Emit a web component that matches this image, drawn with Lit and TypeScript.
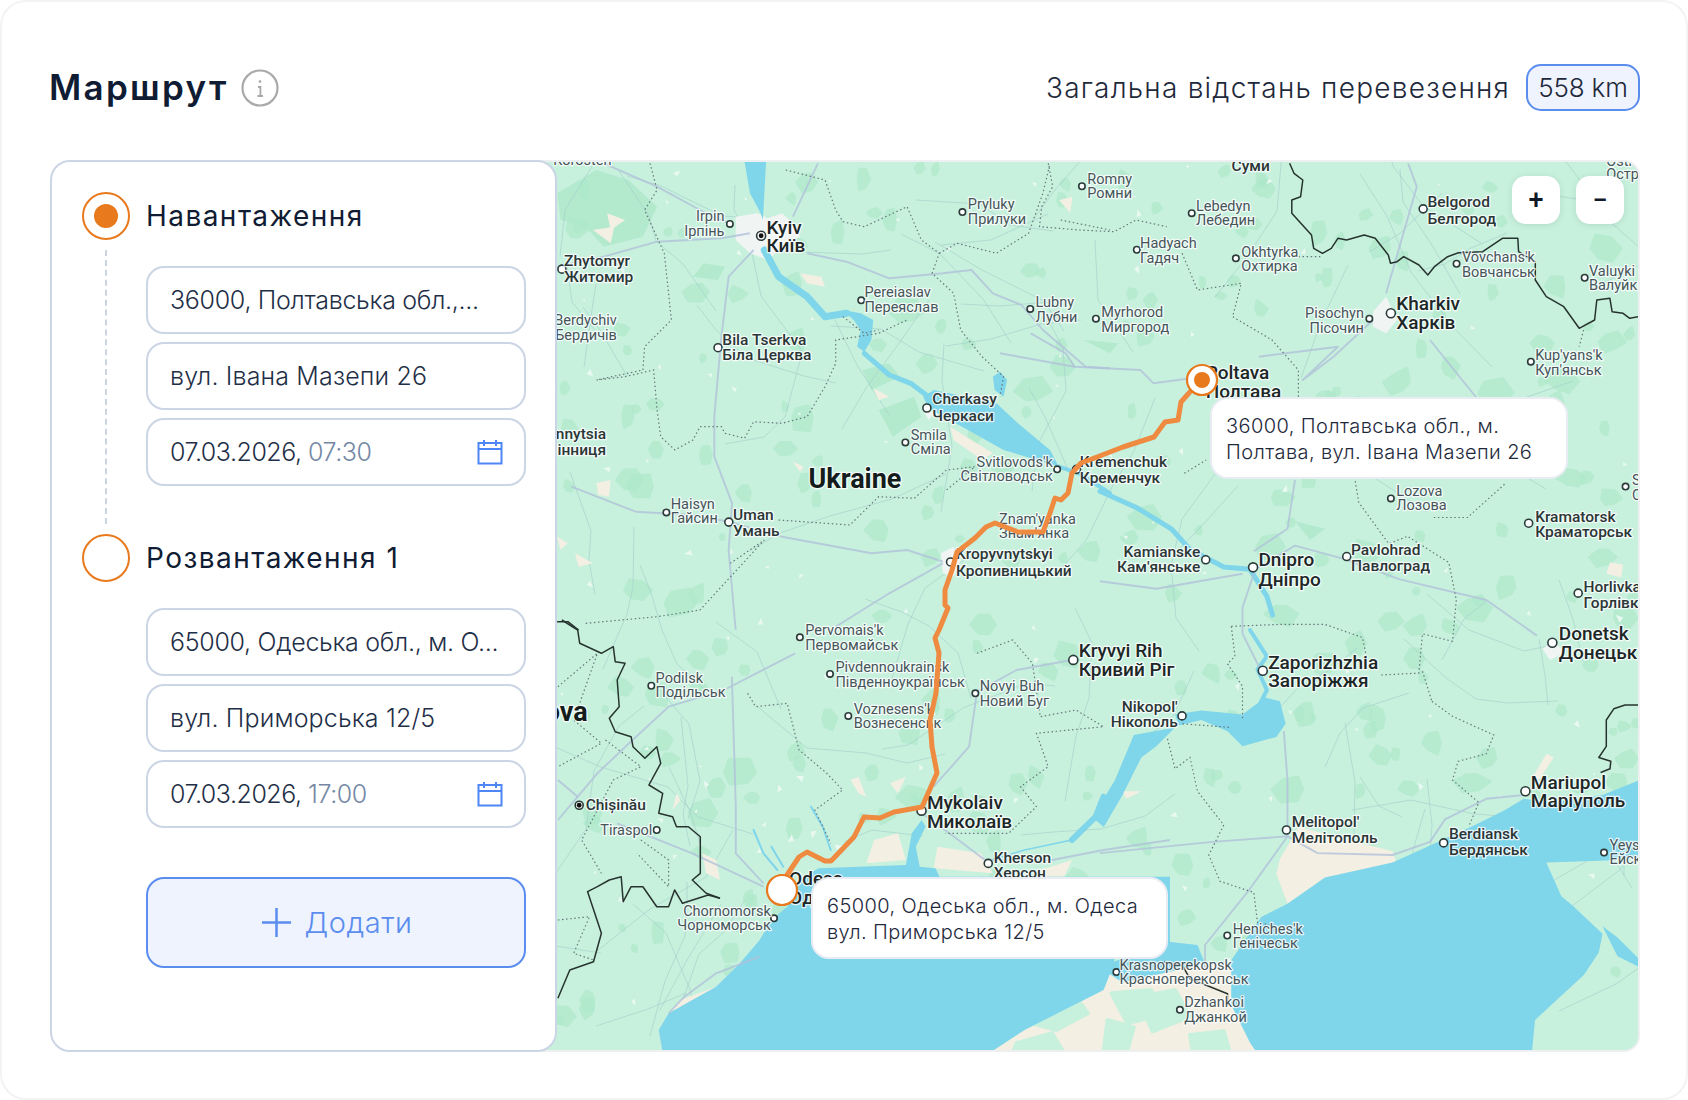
import { LitElement, html, css, svg } from "lit";
import { customElement } from "lit/decorators.js";

const ZS: Record<string, number[]> = {
  z3: [1000, 0, 1 / 2.279, 1 / 3],
  z4: [550, 150, 1 / 2.8, 1 / 3],
  z5: [550, 620, 1 / 2.529, 1 / 3],
  z6: [1100, 480, 0.375, 0.375],
};
const P = (z: string, s: string) => {
  const [ox, oy, sx, sy] = ZS[z];
  return s.trim().split(/\s+/).map((t) => {
    const [x, y] = t.split(",").map(Number);
    return `${(ox + x * sx).toFixed(1)},${(oy + y * sy).toFixed(1)}`;
  }).join(" ");
};

const SEA = [
  ["z5", "600,860 640,770 680,745 900,735 915,640 940,600 950,620 925,680 935,740 975,745 985,770 1568,770 1568,1000 1430,1010 1420,1050 1400,1110 1300,1170 1200,1230 1110,1300 285,1300 275,1230 300,1180 420,1100 480,1030 530,960 560,900"],
  ["z6", "350,1280 430,1165 500,1130 600,1060 780,1020 880,975 1000,920 1080,880 1130,850 1200,860 1340,840 1440,800 1440,1005 1350,1015 1190,1020 1230,1110 1260,1135 1340,1210 1330,1260 1290,1320 1160,1440 1150,1545 430,1545 400,1500 350,1400"],
  ["z4", "545,36 605,36 596,210 590,190 560,130"],
  ["z4", "1045,740 1075,720 1250,760 1310,820 1400,900 1425,950 1270,900 1170,840 1060,775"],
  ["z4", "1240,680 1260,665 1280,690 1270,740 1245,720"],
  ["z4", "820,480 870,490 905,510 900,570 880,605 860,590 870,540 850,510"],
  ["z6", "380,625 440,580 480,590 495,650 470,685 380,710 340,670 270,640 210,655 200,625 270,615"],
  ["z6", "90,680 200,660 150,710 110,740 60,840 10,925 -20,900 40,800"],
  ["z6", "170,1230 260,1240 280,1290 60,1340 0,1300"],
  ["z6", "1340,1190 1380,1220 1440,1280 1440,1300 1380,1270"],
];
const RIVERS = [
  ["z4", "600,300 640,380 720,440 770,500 830,490", 7],
  ["z4", "880,610 950,675 1010,700 1060,740", 5],
  ["z4", "1425,950 1480,970 1568,1030", 4],
  ["z6", "0,30 100,75 190,130 240,185 330,232 400,238 445,310 460,360", 5],
  ["z6", "400,400 445,470 420,505 445,560 425,600", 4],
  ["z5", "1400,530 1380,590 1320,660", 6],
  ["z5", "1320,660 1200,690 1115,720", 1.5],
  ["z5", "660,560 690,620 710,690", 2],
  ["z5", "515,630 540,700 575,750", 2],
  ["z5", "560,680 590,740", 2],
];
const BEIGE = [
  ["z5", "1110,1300 1200,1230 1300,1170 1400,1110 1430,1060 1568,1090 1568,1300"],
  ["z6", "0,1330 60,1290 350,1290 350,1400 400,1500 430,1545 0,1545"],
  ["z6", "480,1010 530,925 780,990 790,1020 600,1060 500,1130 470,1050"],
  ["z5", "285,1300 275,1230 300,1180 330,1140 420,1100 480,1030 530,960 545,990 500,1060 400,1130 340,1190 330,1300"],
  ["z5", "760,480 780,470 800,530 780,520"],
  ["z5", "860,490 900,470 880,520"],
  ["z5", "820,660 880,640 900,720 800,730"],
  ["z5", "980,680 1090,700 1120,760 970,745"],
  ["z5", "1240,750 1320,720 1300,770 1240,770"],
  ["z5", "385,700 420,720 430,780 395,760"],
  ["z5", "320,520 330,540 310,570"],
  ["z6", "1190,730 1210,740 1170,800 1150,800"],
  ["z6", "1360,220 1395,225 1390,260 1350,250"],
  ["z4", "120,240 180,230 170,280"],
  ["z4", "160,190 210,210 170,240"],
  ["z4", "700,370 760,380 770,410 720,400"],
  ["z4", "905,715 950,740 920,750"],
  ["z4", "680,935 710,950 700,965"],
  ["z4", "130,1000 170,990 165,1040 135,1035"],
  ["z4", "20,1160 50,1180 30,1200"],
  ["z4", "70,1210 120,1240 80,1250"],
  ["z4", "1120,830 1240,910 1210,930 1130,870"],
  ["z3", "135,600 165,590 160,640"],
  ["z6", "60,830 110,830 70,850"],
];
const WHITE = [
  ["z4", "520,200 580,190 610,205 650,190 680,220 700,260 640,300 610,330 560,310 520,270"],
  ["z3", "850,935 880,890 905,960 880,1000 850,980"],
  ["z4", "1095,1210 1130,1190 1150,1230 1130,1280 1100,1270"],
  ["z4", "1040,770 1075,790 1060,810"],
  ["z6", "1180,450 1210,430 1240,460 1200,480"],
];
const ROADS = [
  ["z4", "20,350 150,320 300,275 480,265 560,250"],
  ["z4", "570,300 500,380 480,560 460,800 460,920 510,1060 500,1200 520,1440"],
  ["z4", "720,310 830,335 950,385 1100,370 1180,360 1240,430 1320,465 1380,540 1500,650 1568,655"],
  ["z4", "500,1115 650,1160 900,1210 1000,1200 1100,1235"],
  ["z4", "1100,1240 950,1330 800,1430"],
  ["z4", "150,40 300,110 420,180 500,220"],
  ["z4", "750,40 680,200"],
  ["z4", "60,1010 240,1085 400,1095 500,1115"],
  ["z5", "620,100 440,210 300,260 200,370 120,460 70,530 20,480"],
  ["z5", "70,530 20,600"],
  ["z5", "540,790 470,700 470,560 460,170"],
  ["z5", "540,800 360,700 170,610"],
  ["z5", "940,580 1010,640 1100,720 1270,720 1400,690 1568,660"],
  ["z5", "1320,120 1180,150 1080,215 1060,380 970,500"],
  ["z5", "530,1010 420,1060 340,1130 300,1180"],
  ["z6", "0,995 300,965 500,950 400,1090 280,1240 280,1300"],
  ["z6", "410,240 520,175 650,210 800,265 1030,320 1165,415"],
  ["z6", "410,250 380,340 380,410 430,510"],
  ["z6", "490,670 500,800 500,950"],
  ["z6", "0,270 150,290 380,250"],
  ["z6", "500,950 580,995 780,1000 880,965 920,905 1030,850 1130,840"],
  ["z6", "410,190 500,130 520,0"],
  ["z3", "590,1070 770,1040 690,1140 760,1070 850,960"],
  ["z3", "0,1060 170,1100 320,1110 350,1150 460,1130"],
  ["z3", "880,880 950,560 930,490"],
  ["z3", "70,1000 150,1060 170,1100"],
  ["z3", "980,1020 1090,1200"],
];
const DOTTED = [
  ["z4", "280,40 300,120 265,180 320,310 340,510 265,590 260,660 130,690 210,680 290,660 300,780 310,860 350,900 400,870 420,830 480,830 490,850 545,865 570,815 650,820 720,800 770,710 800,640 800,570 920,550 1000,510"],
  ["z4", "660,60 770,90 800,180 820,215 880,230 1000,170 1040,270 1090,310 1070,370 1130,430 1150,540 1210,620 1270,680 1260,740"],
  ["z4", "1090,310 1140,280 1250,310 1340,250 1380,130 1400,40"],
  ["z4", "1430,210 1568,240"],
  ["z4", "640,1110 840,1125 920,1040 1020,1045 1110,960 1190,950 1110,1020"],
  ["z4", "100,1420 300,1400 420,1380 600,1170 505,1240"],
  ["z4", "820,500 880,550 920,540"],
  ["z5", "500,220 520,260 600,250 630,390 700,460 740,510 670,570 710,670"],
  ["z5", "1080,100 1170,60 1220,130 1240,290 1330,270 1400,320 1230,340 1260,440 1190,500 1230,560 1160,640 1000,640"],
  ["z5", "20,200 120,100 60,300 130,370 20,440"],
  ["z5", "140,360 230,440 160,480 80,660 130,760"],
  ["z5", "230,660 300,720 300,800 220,700"],
  ["z5", "20,900 100,890 60,1000 110,1020"],
  ["z6", "350,390 480,385 600,385 700,420 710,470"],
  ["z6", "350,390 360,470 340,490 380,550 380,640"],
  ["z6", "180,690 200,770 240,740 260,830 330,920 290,1000 320,1070 410,1100 420,1180 470,1190"],
  ["z6", "750,520 850,515 860,410 940,430 950,320 930,220 820,150 770,170 690,60 680,0"],
  ["z6", "885,590 940,630 1050,680 1030,730 955,750 940,800 1010,860 985,920"],
  ["z6", "860,510 885,590"],
  ["z6", "890,100 980,100 1080,10"],
  ["z6", "220,650 350,660"],
  ["z3", "110,490 120,560 95,620 90,680 180,690 260,695 310,660 380,680"],
  ["z3", "415,760 450,870 550,850 530,950 620,1020 680,1110 680,1190"],
  ["z3", "1330,990 1320,1040"],
  ["z3", "420,1420 470,1380"],
  ["z3", "680,770 730,770"],
];
const BORDERS = [
  ["z3", "660,490 670,520 690,540 685,590 665,600 665,640 710,705 715,745 735,760 755,745 770,715 790,720 830,705 855,715 885,765 890,790 905,785 920,770 955,795 975,825 990,800 1020,770 1045,758 1100,755 1145,715 1180,715 1182,755 1220,785 1220,840 1245,890 1285,920 1320,985 1355,960 1360,900 1390,895 1395,935 1420,940 1435,955 1455,950"],
  ["z5", "30,0 70,30 75,70 130,100 160,80 165,125 190,130 170,180 175,260 150,295 165,335 205,350 210,380 240,415 270,380 280,430 250,495 285,520 275,580 310,590 320,620 350,620 380,650 380,760 360,780 395,820 430,835"],
  ["z5", "20,1135 50,1050 110,1025 130,940 95,815 120,800 150,780 180,770 185,845 205,800 235,800 270,860 300,860 315,810 335,850 400,825 430,835"],
  ["z4", "20,1415 50,1415 80,1440"],
  ["z6", "1440,600 1400,600 1370,610 1350,640 1350,710 1330,740 1362,750 1360,770 1335,780"],
  ["z6", "170,1285 220,1295 240,1330 340,1370 340,1400"],
];
const GREENS = [
  ["z4", "20,130 130,60 220,90 300,170 260,260 150,290 100,230 30,210"],
  ["z4", "430,340 490,350 470,390 400,380"],
  ["z4", "920,780 1020,740 1040,800 960,860"],
  ["z4", "875,660 950,640 980,680 900,720"],
  ["z3", "190,1020 270,1030 250,1060"],
  ["z6", "520,110 600,130 560,160"],
];
const STEPPE = [
  ["z5", "1240,1160 1330,1130 1360,1180 1280,1230 1220,1210"],
  ["z5", "1420,1120 1520,1110 1560,1180 1460,1210"],
  ["z5", "1180,1270 1270,1240 1300,1300 1170,1300"],
  ["z6", "100,1380 200,1360 240,1430 140,1470"],
  ["z6", "20,1440 90,1460 70,1530 10,1520"],
  ["z6", "240,1480 330,1470 350,1540 250,1540"],
];

/* seeded scatter of woodland patches and bare specks */
function scatter() {
  let s = 8273;
  const r = () => ((s = (s * 16807) % 2147483647) / 2147483647);
  const blobs: string[] = [];
  const specks: string[] = [];
  for (let i = 0; i < 300; i++) {
    const x = 557 + r() * 1081, y = 162 + r() * 889;
    const R = 3 + r() * 11, n = 6, pts: string[] = [];
    const st = 0.5 + r() * 0.9;
    for (let k = 0; k < n; k++) {
      const a = (k / n) * Math.PI * 2, rr = R * (0.6 + r() * 0.6);
      pts.push(`${(x + Math.cos(a) * rr * st).toFixed(1)},${(y + Math.sin(a) * rr).toFixed(1)}`);
    }
    blobs.push(pts.join(" "));
  }
  for (let i = 0; i < 110; i++) {
    const x = 557 + r() * 1081, y = 162 + r() * 889, R = 3 + r() * 6, a = r() * 6;
    specks.push(`${x.toFixed(1)},${y.toFixed(1)} ${(x + Math.cos(a) * R).toFixed(1)},${(y + Math.sin(a) * R).toFixed(1)} ${(x + Math.cos(a + 1) * R * 0.7).toFixed(1)},${(y + Math.sin(a + 1) * R * 0.7).toFixed(1)}`);
  }
  const thin: string[] = [];
  for (let i = 0; i < 95; i++) {
    let x = 557 + r() * 1081, y = 162 + r() * 889;
    const pts = [`${x.toFixed(0)},${y.toFixed(0)}`];
    let a = r() * 6.28;
    const n = 2 + Math.floor(r() * 3);
    for (let k = 0; k < n; k++) {
      a += (r() - 0.5) * 1.2;
      const L = 25 + r() * 45;
      x += Math.cos(a) * L; y += Math.sin(a) * L;
      pts.push(`${x.toFixed(0)},${y.toFixed(0)}`);
    }
    thin.push(pts.join(" "));
  }
  return { blobs, specks, thin };
}
const SC = scatter();

const ROUTE = "1202,380 1189,393 1181,402 1178,420 1165,422 1154,437 1123,447 1097,457 1081,463 1072,473 1068,493 1061,500 1055,498 1050,513 1043,532 1018,532 995,523 986,527 975,538 957,552 952,570 945,590 945,605 948,608 939,630 935,638 939,653 936,693 930,720 932,747 937,773 922,807 894,812 880,818 864,817 854,837 831,861 825,861 807,852 799,857 787,875 782,890";

type C = [string, number, string, number, string?, number?, (number | null)?, (number | null)?, string?];
/* kind, x, line1, y1, line2, y2, dotX, dotY, anchor — display coords (0.929 of page) */
const CITIES: C[] = [
  ["maj", 712, "Kyiv", 211, "Київ", 228, 707, 219],
  ["maj", 1297, "Kharkiv", 282, "Харків", 300, 1292, 291],
  ["maj", 1169, "Dnipro", 520, "Дніпро", 538, 1164, 527],
  ["maj", 1448, "Donetsk", 588, "Донецьк", 606, 1442, 597],
  ["maj", 1002, "Kryvyi Rih", 604, "Кривий Ріг", 622, 997, 613],
  ["maj", 1178, "Zaporizhzhia", 615, "Запоріжжя", 632, 1173, 623],
  ["maj", 861, "Mykolaiv", 745, "Миколаїв", 763, 856, 753],
  ["maj", 1422, "Mariupol", 727, "Маріуполь", 744, 1417, 735],
  ["maj", 733, "Odesa", 816, "Одеса", 834],
  ["med", 544, "Chișinău", 748, undefined, undefined, 538, 748],
  ["med", 524, "Zhytomyr", 242, "Житомир", 257, 522, 250],
  ["med", 671, "Bila Tserkva", 316, "Біла Церква", 330, 667, 323],
  ["med", 866, "Cherkasy", 371, "Черкаси", 386, 861, 379],
  ["med", 888, "Kropyvnytskyi", 515, "Кропивницький", 530, 883, 522],
  ["med", 681, "Uman", 478, "Умань", 493, 677, 485],
  ["med", 1003, "Kremenchuk", 429, "Кременчук", 444, 1000, 436],
  ["med", 563, "Vinnytsia", 403, "Вінниця", 418, null, null, "end"],
  ["med", 1326, "Belgorod", 188, "Белгород", 203, 1322, 194],
  ["med", 1426, "Kramatorsk", 480, "Краматорськ", 494, 1420, 486],
  ["med", 1255, "Pavlohrad", 511, "Павлоград", 526, 1251, 517],
  ["med", 1115, "Kamianske", 513, "Кам'янське", 527, 1120, 520, "end"],
  ["med", 1471, "Horlivka", 545, "Горлівка", 560, 1466, 551],
  ["med", 1094, "Nikopol'", 657, "Нікополь", 671, 1098, 665, "end"],
  ["med", 1346, "Berdiansk", 775, "Бердянськ", 790, 1341, 783],
  ["med", 1200, "Melitopol'", 764, "Мелітополь", 778, 1195, 771],
  ["med", 923, "Kherson", 797, "Херсон", 811, 918, 802],
  ["med", 1144, "Суми", 154],
  ["maj", 1120, "Poltava", 346, "Полтава", 364],
  ["min", 1010, "Romny", 167, "Ромни", 180, 1005, 173],
  ["min", 899, "Pryluky", 190, "Прилуки", 204, 894, 197],
  ["min", 1111, "Lebedyn", 192, "Лебедин", 205, 1107, 198],
  ["min", 1059, "Hadyach", 226, "Гадяч", 240, 1056, 232],
  ["min", 1153, "Okhtyrka", 235, "Охтирка", 248, 1148, 240],
  ["min", 1358, "Vovchans'k", 239, "Вовчанськ", 253, 1353, 245],
  ["min", 1476, "Valuyki", 252, "Валуйки", 265, 1472, 258],
  ["min", 673, "Irpin", 201, "Ірпінь", 215, 678, 208, "end"],
  ["min", 1267, "Pisochyn", 291, "Пісочин", 305, 1272, 296, "end"],
  ["min", 962, "Lubny", 281, "Лубни", 295, 957, 287],
  ["min", 1023, "Myrhorod", 290, "Миргород", 304, 1018, 296],
  ["min", 803, "Pereiaslav", 272, "Переяслав", 286, 800, 279],
  ["min", 1426, "Kup'yans'k", 330, "Куп'янськ", 344, 1422, 336],
  ["min", 846, "Smila", 405, "Сміла", 418, 841, 411],
  ["min", 978, "Svitlovods'k", 430, "Світловодськ", 443, 982, 436, "end"],
  ["min", 623, "Haisyn", 469, "Гайсин", 482, 619, 476],
  ["min", 928, "Znam'yanka", 483, "Знам'янка", 496],
  ["min", 1297, "Lozova", 457, "Лозова", 470, 1292, 463],
  ["min", 573, "Berdychiv", 298, "Бердичів", 312, null, null, "end"],
  ["min", 748, "Pervomais'k", 586, "Первомайськ", 600, 743, 592],
  ["min", 609, "Podilsk", 630, "Подільськ", 643, 605, 637],
  ["min", 776, "Pivdennoukrainsk", 620, "Південноукраїнськ", 634, 771, 626],
  ["min", 910, "Novyi Buh", 638, "Новий Буг", 652, 906, 644],
  ["min", 793, "Voznesens'k", 659, "Вознесенськ", 672, 788, 665],
  ["min", 606, "Tiraspol", 771, undefined, undefined, 610, 771, "end"],
  ["min", 1495, "Yeys'k", 785, "Ейск", 798, 1490, 792],
  ["min", 716, "Chornomorsk", 847, "Чорноморськ", 860, 719, 853, "end"],
  ["min", 1145, "Heniches'k", 863, "Генічеськ", 876, 1140, 869],
  ["min", 1040, "Krasnoperekopsk", 897, "Красноперекопськ", 910, 1037, 903],
  ["min", 1100, "Dzhankoi", 931, "Джанкой", 945, 1096, 938],
  ["min", 1492, "Ostr", 150, "Остр", 162],
  ["min", 568, "Korosten", 149, undefined, undefined, null, null, "end"],
  ["min", 1516, "Sloviansk", 446, "Слов'янськ", 460, 1510, 452],
];
const K = 1688 / 1568;

@customElement("app-root")
export class AppRoot extends LitElement {
  static styles = css`
    :host { display: block; width: 1688px; height: 1100px; background: #fff; font-family: Inter, "Noto Sans", sans-serif; color: #0f1c33; }
    .card { box-sizing: border-box; width: 1688px; height: 1100px; border: 2px solid #f2f3f5; border-radius: 26px; padding: 62px 46px 0 48px; background: #fff; }
    .head { display: flex; justify-content: space-between; align-items: center; height: 47px; margin-bottom: 49px; }
    .title-wrap { display: flex; align-items: center; gap: 12px; }
    h1 { margin: 0 0 0 -1px; font-size: 35px; line-height: 47px; font-weight: 600; color: #0f1c33; letter-spacing: 2.3px; }
    .info { display: block; width: 38px; height: 38px; }
    .dist { display: flex; align-items: center; gap: 16px; }
    .dist-label { font-size: 28px; font-weight: 300; color: #1e293b; letter-spacing: 1.24px; }
    .badge { box-sizing: border-box; height: 47px; width: 114px; display: flex; align-items: center; justify-content: center; border: 2px solid #5b8def; border-radius: 15px; background: #eef3fe; font-size: 26px; font-weight: 300; color: #1e293b; letter-spacing: -0.2px; }
    .main { display: flex; height: 892px; }
    .panel { position: relative; z-index: 1; box-sizing: border-box; flex: 0 0 507px; height: 892px; border: 2px solid #cbd5e5; border-radius: 20px; background: #fff; padding: 30px 27px 0 30px; }
    .step { display: grid; grid-template-columns: 48px 380px; column-gap: 16px; }
    .rail { grid-row: 1 / 3; display: flex; flex-direction: column; align-items: center; }
    .circle { box-sizing: border-box; flex: 0 0 48px; width: 48px; height: 48px; border-radius: 50%; border: 2px solid #e8791c; display: flex; align-items: center; justify-content: center; background: #fff; }
    .dot { width: 24px; height: 24px; border-radius: 50%; background: #e8791c; }
    .line { flex: 1; width: 0; margin: 10px 0; border-left: 2px dashed #cbd5e1; }
    .label { height: 48px; line-height: 49px; font-size: 28px; font-weight: 400; color: #0f1c33; letter-spacing: 1.45px; white-space: nowrap; }
    .fields { margin-top: 26px; display: flex; flex-direction: column; gap: 8px; }
    .step.first .fields { margin-bottom: 48px; }
    .input { box-sizing: border-box; height: 68px; border: 2px solid #cbd5e5; border-radius: 18px; padding: 0 22px; display: flex; align-items: center; justify-content: space-between; font-size: 25px; font-weight: 300; color: #1f2f47; background: #fff; white-space: nowrap; letter-spacing: 0.15px; }
    .input.num { letter-spacing: -0.3px; }
    .input.date { letter-spacing: -0.47px; }
    .muted { color: #7488a5; }
    .cal { display: block; width: 26px; height: 26px; margin-right: -1px; }
    .add { box-sizing: border-box; margin: 49px 0 0 64px; width: 380px; height: 91px; border: 2px solid #5b8def; border-radius: 18px; background: #eef3fe; display: flex; align-items: center; justify-content: center; gap: 12px; font-family: inherit; font-size: 29px; font-weight: 300; color: #5b8def; letter-spacing: 0.6px; padding: 0 0 0 2px; }
    .add svg { display: block; width: 31px; height: 31px; }
    .map { position: relative; box-sizing: border-box; flex: 0 0 1103px; margin-left: -20px; height: 892px; border: 2px solid #eeeff1; border-left: none; border-radius: 0 16px 16px 0; overflow: hidden; background: #c7f1dd; }
    .map > svg { display: block; width: 1101px; height: 888px; }
    .ctrls { position: absolute; top: 14px; right: 14px; display: flex; gap: 16px; }
    .ctrl { width: 48px; height: 48px; border-radius: 14px; background: #fff; box-shadow: 0 1px 6px rgba(30, 60, 60, 0.12); display: flex; align-items: center; justify-content: center; font-family: Roboto, sans-serif; font-weight: 500; font-size: 27px; line-height: 1; color: #111827; }
    .tip { position: absolute; box-sizing: border-box; height: 82px; border: 2px solid #e9edf3; border-radius: 18px; background: #fff; padding: 14px 14px 14px 14px; font-size: 20px; line-height: 26px; font-weight: 300; color: #1e293b; white-space: nowrap; letter-spacing: 0.4px; }
    .tip1 { left: 673px; top: 235px; width: 358px; }
    .tip2 { left: 274px; top: 715px; width: 357px; }
    .sea { fill: #7fd5ea; }
    .river { fill: none; stroke: #7fd5ea; stroke-linejoin: round; stroke-linecap: round; }
    .beige { fill: #f3efe3; }
    .white { fill: #f0f5f4; }
    .forest { fill: #aee8ca; opacity: 0.8; }
    .steppe { fill: #c7f1dd; stroke: #c7f1dd; stroke-width: 4; stroke-linejoin: round; }
    .blob { fill: #aee8ca; stroke: #aee8ca; stroke-width: 3; stroke-linejoin: round; opacity: 0.65; }
    .speck { fill: #eaf8f2; }
    .thin { fill: none; stroke: #a4d0cb; stroke-width: 1; opacity: 0.65; }
    .road { fill: none; stroke: #b1c2da; stroke-linejoin: round; opacity: 0.8; }
    .dotted { fill: none; stroke: #66787a; stroke-dasharray: 1.5 2.6; }
    .border { fill: none; stroke: #27332f; stroke-linejoin: round; }
    .route { fill: none; stroke: #ef8a41; stroke-width: 5; stroke-linejoin: round; stroke-linecap: round; }
    text { font-family: Roboto, sans-serif; paint-order: stroke; stroke: rgba(255, 255, 255, 0.8); stroke-width: 2.5px; stroke-linejoin: round; dominant-baseline: central; }
    .maj { font-size: 19px; font-weight: 500; fill: #1d2727; }
    .med { font-size: 15.5px; font-weight: 500; fill: #2b3636; }
    .min { font-size: 14.5px; font-weight: 400; fill: #46555a; }
    .country { font-size: 27px; font-weight: 700; fill: #141c1c; }
    .cdot { fill: #fff; stroke: #2c3a3a; stroke-width: 1.6; }
    .cap { fill: #111; }
    .pin { fill: #fff; stroke: #e8791c; stroke-width: 2.2; }
    .pin-in { fill: #e8791c; }
  `;

  private city(c: C) {
    const [kind, x, s1, y1, s2, y2, dx, dy, anchor] = c;
    const a = anchor ?? "start";
    const px = x * K;
    const isCap = s1 === "Kyiv" || s1 === "Chișinău";
    return svg`
      ${dx != null && dy != null ? svg`<circle class="cdot" cx=${dx * K} cy=${dy * K} r=${kind === "maj" ? 4.5 : kind === "med" ? 4 : 3.2}></circle>` : null}
      ${isCap && dx != null && dy != null ? svg`<circle class="cap" cx=${dx * K} cy=${dy * K} r="2.4"></circle>` : null}
      <text class=${kind} x=${px} y=${y1 * K} text-anchor=${a}>${s1}</text>
      ${s2 ? svg`<text class=${kind} x=${px} y=${(y2 as number) * K} text-anchor=${a}>${s2}</text>` : null}
    `;
  }

  private polys(list: (string | number)[][], cls: string) {
    return list.map((l) => svg`<polygon class=${cls} points=${P(l[0] as string, l[1] as string)}></polygon>`);
  }
  private lines(list: (string | number)[][], cls: string, w: number) {
    return list.map((l) => svg`<polyline class=${cls} stroke-width=${(l[2] as number) ?? w} points=${P(l[0] as string, l[1] as string)}></polyline>`);
  }

  private calendar() {
    return html`<svg class="cal" viewBox="0 0 26 26" fill="none" stroke="#4f86f7" stroke-width="2"><rect x="1.5" y="4" width="23" height="20.5"></rect><path d="M1.5 10h23M7 1v6M19 1v6"></path></svg>`;
  }

  private map() {
    return html`<svg viewBox="537 162 1101 888">
      ${SC.blobs.map((b) => svg`<polygon class="blob" points=${b}></polygon>`)}
      ${this.polys(GREENS, "forest")}
      ${SC.specks.map((b) => svg`<polygon class="speck" points=${b}></polygon>`)}
      ${SC.thin.map((b) => svg`<polyline class="thin" points=${b}></polyline>`)}
      ${this.polys(WHITE, "white")}
      ${this.polys(BEIGE, "beige")}
      ${this.polys(STEPPE, "steppe")}
      ${this.polys(SEA, "sea")}
      ${this.lines(RIVERS, "river", 6)}
      ${this.lines(ROADS, "road", 1.9)}
      ${this.lines(DOTTED, "dotted", 1.2)}
      ${this.lines(BORDERS, "border", 1.5)}
      ${CITIES.map((c) => this.city(c))}
      <text class="country" x=${751 * K} y=${445 * K}>Ukraine</text>
      <text class="country" x=${546 * K} y=${661 * K} text-anchor="end">Moldova</text>
      <polyline class="route" points=${ROUTE}></polyline>
      <circle class="pin" cx="1202" cy="380" r="15"></circle>
      <circle class="pin-in" cx="1202" cy="380" r="8"></circle>
      <circle class="pin" cx="782" cy="890" r="15"></circle>
    </svg>`;
  }

  render() {
    return html`
      <div class="card">
        <header class="head">
          <div class="title-wrap">
            <h1>Маршрут</h1>
            <svg class="info" viewBox="0 0 38 38" fill="none" stroke="#a9a9a9" stroke-width="2.2">
              <circle cx="19" cy="19" r="17.5"></circle>
              <path d="M17 18h2.4v9M16.5 27h5.5" stroke-width="1.8"></path>
              <circle cx="19" cy="12.5" r="0.9" fill="#a9a9a9" stroke-width="1"></circle>
            </svg>
          </div>
          <div class="dist">
            <span class="dist-label">Загальна відстань перевезення</span>
            <span class="badge">558 km</span>
          </div>
        </header>
        <div class="main">
          <aside class="panel">
            <section class="step first">
              <div class="rail"><div class="circle"><div class="dot"></div></div><div class="line"></div></div>
              <div class="label">Навантаження</div>
              <div class="fields">
                <div class="input num">36000, Полтавська обл.,...</div>
                <div class="input">вул. Івана Мазепи 26</div>
                <div class="input date"><span>07.03.2026, <span class="muted">07:30</span></span>${this.calendar()}</div>
              </div>
            </section>
            <section class="step">
              <div class="rail"><div class="circle"></div></div>
              <div class="label">Розвантаження 1</div>
              <div class="fields">
                <div class="input num">65000, Одеська обл., м. О...</div>
                <div class="input">вул. Приморська 12/5</div>
                <div class="input date"><span>07.03.2026, <span class="muted">17:00</span></span>${this.calendar()}</div>
              </div>
            </section>
            <button class="add">
              <svg viewBox="0 0 32 32" fill="none" stroke="#5b8def" stroke-width="2.6"><path d="M1 16h30M16 1v30"></path></svg>
              Додати
            </button>
          </aside>
          <div class="map">
            ${this.map()}
            <div class="ctrls"><div class="ctrl">+</div><div class="ctrl">−</div></div>
            <div class="tip tip1">36000, Полтавська обл., м.<br />Полтава, вул. Івана Мазепи 26</div>
            <div class="tip tip2">65000, Одеська обл., м. Одеса<br />вул. Приморська 12/5</div>
          </div>
        </div>
      </div>
    `;
  }
}
